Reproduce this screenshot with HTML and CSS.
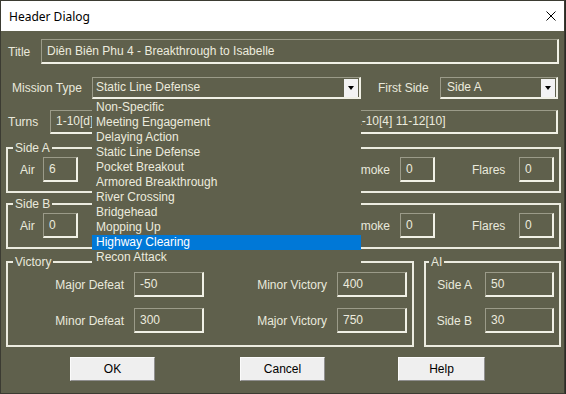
FILE: index.html
```html
<!DOCTYPE html>
<html>
<head>
<meta charset="utf-8">
<title>Header Dialog</title>
<link rel="stylesheet" href="styles.css">
</head>
<body>
<div class="window">
  <div class="titlebar">
    <span class="caption">Header Dialog</span>
    <svg class="close" viewBox="0 0 10 10" width="10" height="10"><path d="M0.5 0.5L9.5 9.5M9.5 0.5L0.5 9.5" stroke="#000" stroke-width="1" fill="none"/></svg>
  </div>
  <div class="content">
    <div class="row row-title">
      <span class="lbl lbl-title">Title</span>
      <div class="field f-title">Diên Biên Phu 4 - Breakthrough to Isabelle</div>
    </div>
    <div class="row row-mission">
      <span class="lbl lbl-mission">Mission Type</span>
      <div class="combo c-mission">
        <span class="combo-text">Static Line Defense</span>
        <span class="combo-btn"></span>
        <ul class="droplist">
          <li>Non-Specific</li>
          <li>Meeting Engagement</li>
          <li>Delaying Action</li>
          <li>Static Line Defense</li>
          <li>Pocket Breakout</li>
          <li>Armored Breakthrough</li>
          <li>River Crossing</li>
          <li>Bridgehead</li>
          <li>Mopping Up</li>
          <li class="sel">Highway Clearing</li>
          <li>Recon Attack</li>
        </ul>
      </div>
      <span class="lbl lbl-first">First Side</span>
      <div class="combo c-side">
        <span class="combo-text">Side A</span>
        <span class="combo-btn"></span>
      </div>
    </div>
    <div class="row row-turns">
      <span class="lbl lbl-turns">Turns</span>
      <div class="field f-turns"><span class="turns-head">1-10[d]</span><span>1-10[4] 11-12[10]</span></div>
    </div>

    <fieldset class="group g-side">
      <legend>Side A</legend>
      <div class="side-row">
        <span class="lbl lbl-air">Air</span>
        <div class="field f-small">6</div>
        <span class="lbl lbl-smoke">Smoke</span>
        <div class="field f-small f-smoke">0</div>
        <span class="lbl lbl-flares">Flares</span>
        <div class="field f-small">0</div>
      </div>
    </fieldset>

    <fieldset class="group g-side g-sideb">
      <legend>Side B</legend>
      <div class="side-row">
        <span class="lbl lbl-air">Air</span>
        <div class="field f-small">0</div>
        <span class="lbl lbl-smoke">Smoke</span>
        <div class="field f-small f-smoke">0</div>
        <span class="lbl lbl-flares">Flares</span>
        <div class="field f-small">0</div>
      </div>
    </fieldset>

    <div class="bottom-row">
      <fieldset class="group g-victory">
        <legend>Victory</legend>
        <div class="victory-grid">
          <span class="glbl">Major Defeat</span>
          <div class="field f-mid">-50</div>
          <span class="glbl">Minor Victory</span>
          <div class="field f-mid">400</div>
          <span class="glbl">Minor Defeat</span>
          <div class="field f-mid">300</div>
          <span class="glbl">Major Victory</span>
          <div class="field f-mid">750</div>
        </div>
      </fieldset>
      <fieldset class="group g-ai">
        <legend>AI</legend>
        <div class="ai-grid">
          <span class="glbl">Side A</span>
          <div class="field f-mid">50</div>
          <span class="glbl">Side B</span>
          <div class="field f-mid">30</div>
        </div>
      </fieldset>
    </div>

    <div class="buttons">
      <button class="btn btn-ok">OK</button>
      <button class="btn btn-cancel">Cancel</button>
      <button class="btn btn-help">Help</button>
    </div>
  </div>
</div>
</body>
</html>
```

FILE: styles.css
```css
* { box-sizing: border-box; }
html, body { margin: 0; padding: 0; }
body {
  width: 566px;
  height: 394px;
  overflow: hidden;
  background: #2b2b25;
  font-family: "Liberation Sans", Arial, sans-serif;
  font-size: 12px;
}
.window {
  width: 565px;
  height: 394px;
  border: 1px solid #3b3b32;
  background: #5f604c;
  display: flex;
  flex-direction: column;
}
.titlebar {
  flex: none;
  height: 30px;
  background: #ffffff;
  display: flex;
  align-items: center;
  justify-content: space-between;
  padding: 0 8px 0 8px;
  font-family: "Noto Sans", "Open Sans", sans-serif;
  font-size: 12px;
  color: #000;
}
.close { display: block; }
.content {
  padding: 0 0 0 5px;
  display: flex;
  flex-direction: column;
  color: #e9e9dc;
}
.row { display: flex; align-items: center; flex: none; }
.lbl { flex: none; white-space: nowrap; }

.field {
  flex: none;
  height: 25px;
  border-style: solid;
  border-width: 1px 2px 2px 1px;
  border-color: #9b9b89 #f1f1e6 #f1f1e6 #9b9b89;
  padding: 0 0 1px 5px;
  display: flex;
  align-items: center;
  white-space: nowrap;
  overflow: hidden;
  color: #ecebde;
}

.row-title { margin-top: 8px; height: 25px; }
.lbl-title { margin-left: 2px; width: 33px; }
.f-title { width: 518px; }

.row-mission { margin-top: 13px; height: 22px; }
.lbl-mission { margin-left: 6px; width: 80px; }
.combo {
  flex: none;
  height: 22px;
  border-style: solid;
  border-width: 1px 2px 2px 1px;
  border-color: #9b9b89 #f1f1e6 #f1f1e6 #9b9b89;
  display: flex;
  align-items: center;
  position: relative;
  padding-left: 3px;
  color: #ecebde;
}
.c-mission { width: 269px; z-index: 2; }
.combo-text { flex: 1; white-space: nowrap; padding-bottom: 1px; }
.combo-btn {
  flex: none;
  width: 14px;
  height: 18px;
  margin-right: 1px;
  background: #f3f3f3;
  display: flex;
  align-items: center;
  justify-content: center;
}
.combo-btn::after {
  content: "";
  width: 0;
  height: 0;
  border-left: 3px solid transparent;
  border-right: 3px solid transparent;
  border-top: 4px solid #000;
}
.lbl-first { margin-left: 17px; width: 62px; }
.c-side { width: 118px; padding-left: 6px; }

.droplist {
  position: absolute;
  left: -1px;
  top: 22px;
  width: 269px;
  margin: 0;
  padding: 0;
  list-style: none;
  background: #5f604c;
  color: #ecebde;
}
.droplist li {
  height: 15px;
  line-height: 15px;
  padding-left: 4px;
  white-space: nowrap;
}
.droplist li.sel { background: #0078d7; color: #ffffff; }

.row-turns { margin-top: 11px; height: 24px; }
.lbl-turns { margin-left: 2px; width: 42px; }
.f-turns { width: 508px; height: 24px; }
.turns-head { flex: none; width: 299px; overflow: hidden; }

.group {
  margin: 0;
  padding: 0;
  min-width: 0;
  border: 2px solid #ecece0;
}
.group legend {
  padding: 0 2px;
  margin-left: 5px;
  height: 14px;
  line-height: 14px;
  font-size: 12px;
  color: #e9e9dc;
}
.g-side { width: 555px; margin-top: 7px; padding: 2px 0 9px 0; }
.g-sideb { margin-top: 4px; }
.side-row { display: flex; align-items: center; }
.lbl-air { margin-left: 12px; width: 23px; }
.f-small { width: 35px; }
.lbl-smoke { margin-left: 266px; width: 46px; text-align: right; }
.f-smoke { margin-left: 10px; }
.lbl-flares { margin-left: 37px; width: 47px; }

.bottom-row { display: flex; margin-top: 6px; flex: none; }
.g-victory { width: 408px; padding: 3px 0 12px 0; }
.g-ai { width: 137px; margin-left: 10px; padding: 3px 0 12px 0; }
.g-ai legend { margin-left: 3px; }
.victory-grid {
  display: grid;
  grid-template-columns: 116px 70px 113px 70px;
  column-gap: 10px;
  row-gap: 11px;
  align-items: center;
}
.ai-grid {
  display: grid;
  grid-template-columns: 46px 69px;
  column-gap: 13px;
  row-gap: 11px;
  align-items: center;
}
.glbl { text-align: right; white-space: nowrap; }
.f-mid { width: 100%; }

.buttons { display: flex; margin-top: 10px; flex: none; }
.btn {
  flex: none;
  height: 24px;
  padding: 0;
  background: #efefef;
  border: 1px solid;
  border-color: #fbfbfb #8f8f8f #8f8f8f #fbfbfb;
  font-family: "Liberation Sans", Arial, sans-serif;
  font-size: 12px;
  color: #000;
}
.btn-ok { margin-left: 64px; width: 85px; }
.btn-cancel { margin-left: 85px; width: 85px; }
.btn-help { margin-left: 73px; width: 87px; }
```
